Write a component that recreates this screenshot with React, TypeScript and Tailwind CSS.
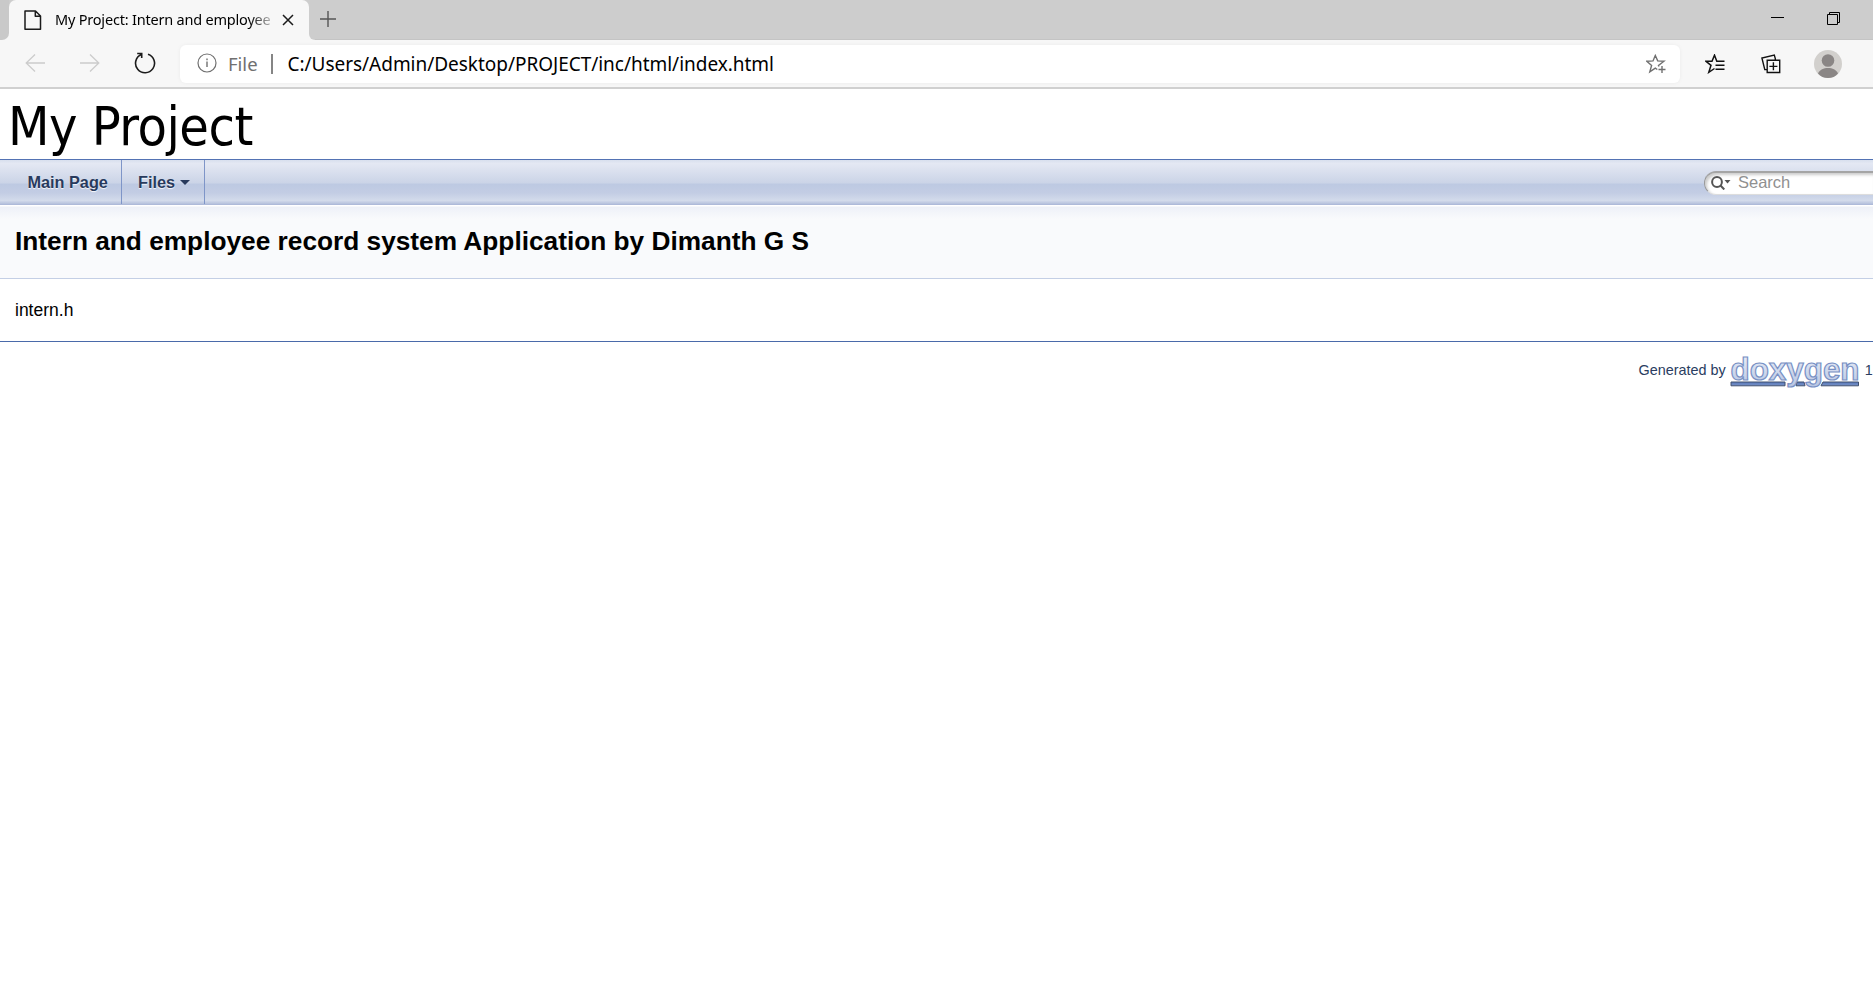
import React from "react";

const ui = "font-['Noto_Sans',sans-serif]";

function Tabs() {
  return (
    <div className="flex h-10 shrink-0 items-stretch bg-[#cdcdcd] shadow-[inset_0_-1px_0_#c4c4c4]">
      <div className="flex w-[9px] shrink-0 items-end bg-[#f7f7f7]">
        <div className="h-10 w-full rounded-br-[7px] bg-[#c9c9c9]" />
      </div>
      <div className="flex w-[300px] shrink-0 items-center rounded-t-[7px] bg-[#f7f7f7] pl-[15px]">
        <svg width="18" height="21" viewBox="0 0 18 21" fill="none" stroke="#1b1b1b" strokeWidth="1.5" strokeLinejoin="round">
          <path d="M1 1h10.500l5 5v13.200H1zM11.300 1v5.200h5.200" />
        </svg>
        <div className={`${ui} mb-[2px] ml-[13px] w-[216px] whitespace-nowrap text-[14.500px] leading-6 tracking-[-0.2px] text-black [mask-image:linear-gradient(to_right,#000_90%,rgba(0,0,0,0.25))]`}>
          My Project: Intern and employee
        </div>
        <svg className="ml-[11px]" width="12" height="12" viewBox="0 0 12 12" stroke="#1b1b1b" strokeWidth="1.500">
          <path d="M1 1l10 10M11 1L1 11" />
        </svg>
      </div>
      <div className="w-[6px] shrink-0 bg-[#f7f7f7]">
        <div className="h-10 w-full rounded-bl-[7px] bg-[#cdcdcd]" />
      </div>
      <svg className="ml-[5px] mt-[11px]" width="16" height="16" viewBox="0 0 16 16" stroke="#555" strokeWidth="1.4">
        <path d="M8 0v16M0 8h16" />
      </svg>
      <svg className="ml-auto mr-[43px] mt-[17px]" width="13" height="1" viewBox="0 0 13 1" fill="#000">
        <path d="M0 0h13v1H0z" />
      </svg>
      <svg className="mr-[33px] mt-3" width="13" height="13" viewBox="0 0 13 13" fill="none" stroke="#000">
        <path d="M.5 2.500h10v10H.5zM2.500 2.500v-2h10v10h-2" />
      </svg>
    </div>
  );
}

function Toolbar() {
  return (
    <div className="flex h-[49px] shrink-0 items-center border-b-2 border-[#d0d0d0] bg-[#f7f7f7]">
      <svg className="mb-px ml-[25px]" width="20" height="18" viewBox="0 0 20 18" fill="none" stroke="#cccccc" strokeWidth="1.300">
        <path d="M10 .5L1.200 9l8.800 8.500M1.200 9H20" />
      </svg>
      <svg className="mb-px ml-[35px]" width="20" height="18" viewBox="0 0 20 18" fill="none" stroke="#cccccc" strokeWidth="1.300">
        <path d="M10 .5L18.800 9 10 17.500M18.800 9H0" />
      </svg>
      <svg className="mb-px ml-[34px]" width="22" height="22" viewBox="0 0 22 22" fill="none" stroke="#1b1b1b" strokeWidth="1.600">
        <path d="M14 2.200A9.500 9.500 0 1 1 7.300 2.500M3.200 1.500h4.500V6" />
      </svg>
      <div className="ml-[24px] flex h-[38px] w-[1500px] items-center rounded-[6px] bg-white pl-[17px] pr-[14px] shadow-[0_0_4px_rgba(0,0,0,0.05)]">
        <svg className="mb-[2px]" width="20" height="20" viewBox="0 0 20 20" fill="none" stroke="#707070" strokeWidth="1.200">
          <circle cx="10" cy="10" r="9" />
          <path d="M10 8.500v5.500M10 5.500v1.700" strokeWidth="1.400" />
        </svg>
        <span className={`${ui} ml-[11px] w-[31px] whitespace-nowrap text-[18.500px] leading-6 text-[#707070]`}>File</span>
        <div className="ml-[12px] h-5 w-[1.500px] bg-[#858585]" />
        <span className={`${ui} ml-[15px] whitespace-nowrap text-[19px] leading-6 tracking-[-0.03px] text-black`}>
          C:/Users/Admin/Desktop/PROJECT/inc/html/index.html
        </span>
        <svg className="ml-auto" width="20" height="20" viewBox="0 0 20 20" fill="none" stroke="#707070" strokeWidth="1.400">
          <path d="M13 12.500L12.500 11.500l5.500-4.300-6.300-.3L9.300 1.500 7 6.900l-6.200.3 4.800 4.200-1.800 6.500 5.500-3.700 2 1.300M16 12v7M12.500 15.500h7" />
        </svg>
      </div>
      <svg className="ml-[25px]" width="20" height="20" viewBox="0 0 20 20" fill="none" stroke="#111" strokeWidth="1.500">
        <path d="M19.500 7.300h-7.700L9.500 1.200 7 7.300H1l5 4-2.200 7L9.500 14.500M10.500 11.300h9M10.500 15.300h9" />
      </svg>
      <svg className="ml-[36px]" width="20" height="20" viewBox="0 0 20 20" fill="none" stroke="#111" strokeWidth="1.400">
        <path d="M6.200 6.200h12.500v12.300H6.200zM12.400 8.300v8M8.400 12.400h8M14.300 6V4.500L13.300 1.100.9 4l2.900 11.600h2.400" />
      </svg>
      <svg className="ml-[33px]" width="28" height="28" viewBox="0 0 28 28">
        <circle cx="14" cy="14" r="14" fill="#d2d0cd" />
        <circle cx="14" cy="10.500" r="6.300" fill="#8a8685" />
        <path d="M4 23.500C6 19.500 9.500 18 14 18s8 1.500 10 5.500C21.500 26.500 18 28 14 28S6.500 26.500 4 23.500z" fill="#8a8685" />
      </svg>
    </div>
  );
}

function Menu() {
  return (
    <nav className="flex h-[46px] shrink-0 border-y border-t-[#5373b4] border-b-[#aebad9] bg-[linear-gradient(to_bottom,#d8dfee_0,#e4e8f3_8%,#cbd4e7_52%,#bdc9e2_55%,#c3cde4_75%,#d3dbeb_92%,#b4c0dc_100%)] text-[16.250px] font-bold leading-[45px] text-[#283a5d] [text-shadow:0_1px_1px_rgba(255,255,255,0.9)]">
      <div className="w-[122px] border-r border-[#7e95c8] pl-[27.500px]">Main Page</div>
      <div className="flex w-[83px] items-center border-r border-[#7e95c8] pl-4">
        <span>Files</span>
        <svg className="ml-[5px]" width="10" height="5" viewBox="0 0 10 5" fill="#283a5d">
          <path d="M0 0h10L5 5z" />
        </svg>
      </div>
      <div className="ml-auto mt-[11px] flex h-6 w-[169px] items-center rounded-l-full border-l border-t-2 border-b border-t-[#a5a5a5] border-l-[#999] border-b-[#ddd] bg-white pb-[3px] pl-[6px] font-normal shadow-[inset_2px_2px_3px_#ccc]">
        <svg className="mt-px" width="20" height="14" viewBox="0 0 20 14" fill="none" stroke="#555" strokeWidth="2">
          <circle cx="6" cy="6" r="4.900" />
          <path d="M9.500 9.500l3.800 4" />
          <path d="M13.500 4h6l-3 3.500z" fill="#555" stroke="none" />
        </svg>
        <span className="ml-[7px] text-[16.500px] leading-5 text-[#909090]">Search</span>
      </div>
    </nav>
  );
}

function DoxygenLogo() {
  return (
    <svg className="ml-[4px] shrink-0 overflow-visible" width="130" height="33" viewBox="0 0 130 33">
      <defs>
        <linearGradient id="letters" x1="0" y1="0" x2="0" y2="1">
          <stop offset="0" stopColor="#f0f3fb" />
          <stop offset="1" stopColor="#b7c5e2" />
        </linearGradient>
        <linearGradient id="bar" x1="0" y1="0" x2="0" y2="1">
          <stop offset="0" stopColor="#5878b8" />
          <stop offset="1" stopColor="#7791c8" />
        </linearGradient>
      </defs>
      <path d="M1 27h54v3.800H1zM67 27h7l1 3.800h-9zM93 27h35.500v3.800H91z" fill="url(#bar)" stroke="#40506e" strokeWidth="1" />
      <text x="0.500" y="24.500" fontFamily="Liberation Sans, Arial, sans-serif" fontWeight="bold" fontSize="31.500" textLength="129" lengthAdjust="spacingAndGlyphs" fill="url(#letters)" stroke="#7890c4" strokeWidth="1.200">
        doxygen
      </text>
    </svg>
  );
}

export default function App() {
  return (
    <div className="flex h-[1006px] w-[1873px] flex-col overflow-hidden bg-white font-['Liberation_Sans',Arial,sans-serif]">
      <Tabs />
      <Toolbar />
      <div className="h-[70px] shrink-0 whitespace-nowrap pl-[8px] pt-[3px] font-['DejaVu_Sans_Condensed','DejaVu_Sans',sans-serif] text-[53.500px] leading-[70px] tracking-[-0.5px] text-black">
        My Project
      </div>
      <Menu />
      <div className="h-[74px] shrink-0 border-b border-[#c4cfe5] bg-[linear-gradient(to_bottom,#fff_0,#fff_1px,#eef1f8_2px,#f9fafc_14px)] pl-[15px]">
        <h1 className="whitespace-nowrap text-[26.250px] font-bold leading-[72px] text-black">
          Intern and employee record system Application by Dimanth G S
        </h1>
      </div>
      <p className="h-[62px] shrink-0 pl-[15px] text-[17.500px] leading-[62px] text-black">intern.h</p>
      <footer className="flex h-[60px] shrink-0 items-center border-t border-[#4a6aaa] pl-[1638.500px] text-[14.400px] text-[#2a3d61]">
        <span className="mb-[2px] whitespace-nowrap">Generated by</span>
        <DoxygenLogo />
        <span className="mb-[2px] ml-[5px] whitespace-nowrap">1</span>
      </footer>
    </div>
  );
}
